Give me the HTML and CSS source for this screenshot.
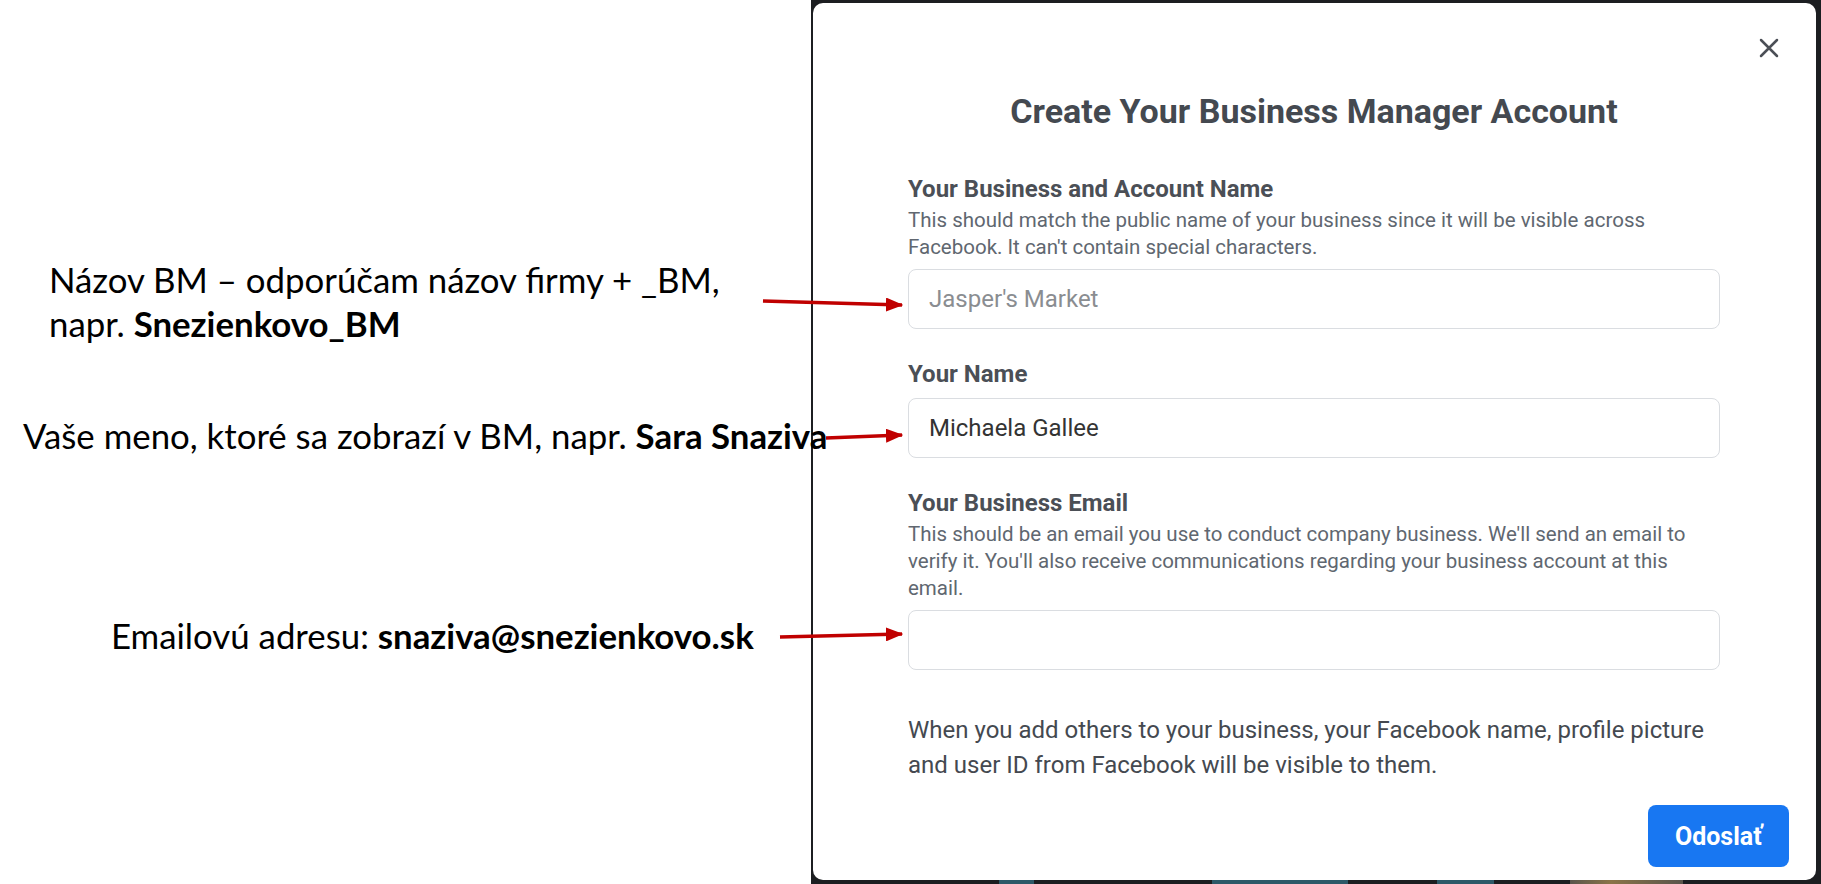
FILE: index.html
```html
<!DOCTYPE html>
<html lang="sk">

<head>
    <meta charset="UTF-8">
    <meta name="viewport" content="width=device-width, initial-scale=1.0">
    <link rel="stylesheet" href="styles.css">
    <title>Business Manager – návod</title>
</head>

<body>

    <div class="slide">

        <div class="notes">
            <p class="note note-name">Názov BM – odporúčam názov firmy + _BM,<br>napr. <b>Snezienkovo_BM</b></p>
            <p class="note note-person">Vaše meno, ktoré sa zobrazí v BM, napr. <b>Sara Snaziva</b></p>
            <p class="note note-email">Emailovú adresu: <b>snaziva@snezienkovo.sk</b></p>
        </div>

        <div class="shot">
            <div class="dialog">
                <button type="button" class="close" aria-label="Close">
                    <svg width="20" height="20" viewBox="0 0 20 20">
                        <path d="M2 2 L18 18 M18 2 L2 18" stroke="#4b4f56" stroke-width="2.5" stroke-linecap="round" />
                    </svg>
                </button>

                <div class="dialog-body">
                    <h1>Create Your Business Manager Account</h1>

                    <div class="field">
                        <label for="bizName">Your Business and Account Name</label>
                        <p class="hint">This should match the public name of your business since it will be visible across Facebook. It can't contain special characters.</p>
                        <input type="text" id="bizName" placeholder="Jasper's Market">
                    </div>

                    <div class="field">
                        <label for="yourName" class="label-tight">Your Name</label>
                        <input type="text" id="yourName" value="Michaela Gallee">
                    </div>

                    <div class="field">
                        <label for="bizEmail">Your Business Email</label>
                        <p class="hint">This should be an email you use to conduct company business. We'll send an email to verify it. You'll also receive communications regarding your business account at this email.</p>
                        <input type="email" id="bizEmail">
                    </div>

                    <p class="notice">When you add others to your business, your Facebook name, profile picture and user ID from Facebook will be visible to them.</p>
                </div>

                <div class="dialog-footer">
                    <button type="button" class="submit">Odoslať</button>
                </div>
            </div>
        </div>

        <svg class="arrows" width="1821" height="884" viewBox="0 0 1821 884">
            <defs>
                <marker id="head" markerWidth="5" markerHeight="4" refX="4.6" refY="2" orient="auto" markerUnits="strokeWidth">
                    <path d="M0 0 L5 2 L0 4 Z" fill="#c00000" />
                </marker>
            </defs>
            <line x1="763" y1="301" x2="902" y2="305" stroke="#c00000" stroke-width="3.5" marker-end="url(#head)" />
            <line x1="826" y1="438" x2="902" y2="435" stroke="#c00000" stroke-width="3.5" marker-end="url(#head)" />
            <line x1="780" y1="637" x2="902" y2="634" stroke="#c00000" stroke-width="3.5" marker-end="url(#head)" />
        </svg>

    </div>

</body>

</html>
```

FILE: styles.css
```css
body {
    margin: 0;
    padding: 0;
    background-color: #fff;
    font-family: Roboto, 'Liberation Sans', sans-serif;
    overflow: hidden;
}

.slide {
    position: relative;
    display: flex;
    width: 1821px;
    height: 884px;
}

/* slide annotations */

.notes {
    position: relative;
    z-index: 2;
    width: 811px;
    flex: none;
    padding-top: 258px;
    box-sizing: border-box;
}

.note {
    margin: 0;
    font-family: Lato, 'Open Sans', sans-serif;
    font-size: 34.8px;
    line-height: 44px;
    color: #000;
    white-space: nowrap;
}

.note b {
    font-weight: 700;
}

.note-name {
    margin-left: 49px;
}

.note-person {
    margin-top: 68px;
    margin-left: 23px;
}

.note-email {
    margin-top: 156px;
    margin-left: 111px;
}

.arrows {
    position: absolute;
    left: 0;
    top: 0;
    z-index: 3;
    pointer-events: none;
}

/* screenshot of the dialog */

.shot {
    flex: 1;
    display: flex;
    padding: 3px 5px 4px 2px;
    background-color: #1c1e21;
    background-image: linear-gradient(to right, #1c1e21 0, #1c1e21 188px, #2d5968 188px, #2d5968 223px, #1c1e21 223px, #1c1e21 401px, #2d5968 401px, #2d5968 537px, #1c1e21 537px, #1c1e21 626px, #2d5968 626px, #2d5968 683px, #1c1e21 683px, #1c1e21 759px, #5a554c 759px, #8a7448 800px, #5a554c 872px, #1c1e21 872px);
    background-size: 100% 4px;
    background-position: bottom;
    background-repeat: no-repeat;
}

.dialog {
    position: relative;
    flex: 1;
    display: flex;
    flex-direction: column;
    background-color: #fff;
    border-radius: 10px;
}

.close {
    position: absolute;
    top: 35px;
    right: 37px;
    width: 20px;
    height: 20px;
    padding: 0;
    border: none;
    background: none;
    cursor: pointer;
}

.close svg {
    display: block;
}

.dialog-body {
    flex: 1;
    padding: 88px 96px 0 95px;
}

h1 {
    margin: 0 0 44px;
    font-size: 34px;
    line-height: 40px;
    font-weight: 700;
    color: #444950;
    text-align: center;
}

.field {
    display: flex;
    flex-direction: column;
    margin-bottom: 31px;
}

label {
    font-size: 24px;
    line-height: 28px;
    font-weight: 700;
    color: #4b4f56;
    margin-bottom: 4px;
}

label.label-tight {
    margin-bottom: 10px;
}

.hint {
    margin: 0 0 8px;
    font-size: 20.5px;
    line-height: 27px;
    color: #606770;
}

input {
    height: 60px;
    box-sizing: border-box;
    padding: 0 20px;
    border: 1px solid #dadde1;
    border-radius: 8px;
    font-family: Roboto, 'Liberation Sans', sans-serif;
    font-size: 24px;
    color: #333;
    outline: none;
}

input::placeholder {
    color: #8a8d91;
}

.notice {
    margin: 43px 0 0;
    font-size: 24px;
    line-height: 35px;
    color: #444950;
}

.dialog-footer {
    display: flex;
    justify-content: flex-end;
    padding: 10px 27px 13px;
}

.submit {
    width: 141px;
    height: 62px;
    border: none;
    border-radius: 8px;
    background-color: #1877f2;
    color: #fff;
    font-family: Roboto, 'Liberation Sans', sans-serif;
    font-size: 25px;
    font-weight: 700;
    cursor: pointer;
}
```
